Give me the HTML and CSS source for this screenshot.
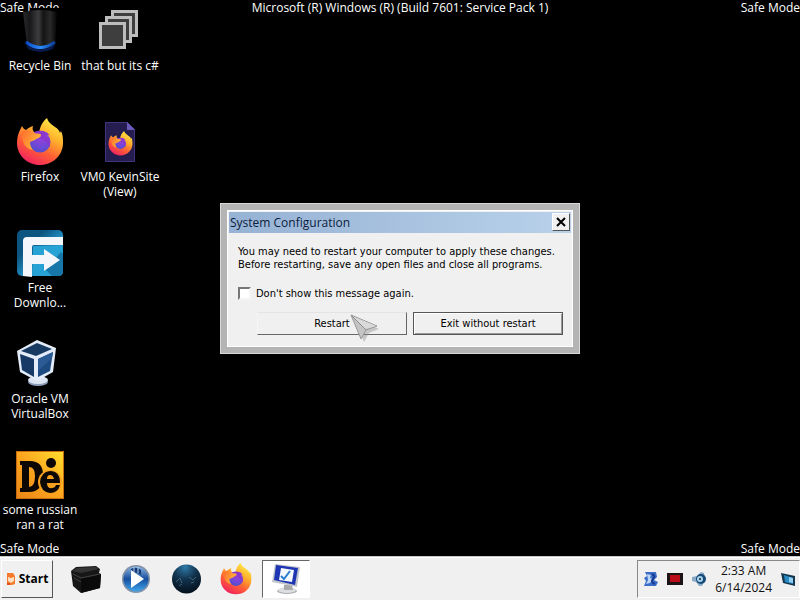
FILE: index.html
```html
<!DOCTYPE html>
<html lang="en">
<head>
<meta charset="utf-8">
<title>Desktop</title>
<link rel="stylesheet" href="styles.css">
</head>
<body>
<svg class="defs" width="0" height="0" aria-hidden="true">
  <defs>
    <linearGradient id="ffBody" x1="0.8" y1="0" x2="0.25" y2="1">
      <stop offset="0" stop-color="#fff04a"/><stop offset="0.35" stop-color="#ffb02c"/><stop offset="0.65" stop-color="#ff5f35"/><stop offset="1" stop-color="#ee1c64"/>
    </linearGradient>
    <radialGradient id="ffGlobe" cx="0.6" cy="0.25" r="0.8">
      <stop offset="0" stop-color="#a03ed8"/><stop offset="0.6" stop-color="#7048d8"/><stop offset="1" stop-color="#4d4fc9"/>
    </radialGradient>
    <linearGradient id="ffFace" x1="0" y1="0" x2="1" y2="0.6">
      <stop offset="0" stop-color="#ff6a2c"/><stop offset="1" stop-color="#ffbd3c"/>
    </linearGradient>
    <symbol id="firefox" viewBox="0 0 48 48">
      <path fill="url(#ffBody)" d="M31 0c1 4 4 6 8 9 3 2 4 3 5 6l1-2c2 4 2 8 2 12 0 12-10 22-23 22S1 37 1 25c0-5 1-9 3-13l2-4c1 2 2 3 4 4 2-2 4-3 7-4-1 3 0 5 1 6l5 1c1-6 3-11 8-15z"/>
      <circle cx="24" cy="24" r="10.500" fill="url(#ffGlobe)"/>
      <path fill="#8b36cd" d="M18 14c5-2 13-2 16 4-3-2-5-1-5 0 5 2 6 8 4 12 0-6-6-10-11-10z"/>
      <path fill="url(#ffFace)" d="M6 14c5-3 9-2 12 1 3 1 7 0 7 2 0 3-4 3-6 5l-5 2c0 3 1 6 3 8-5-1-9-4-10-9-1-4-2-6-1-9z"/>
    </symbol>
  </defs>
</svg>

<main class="desktop">
  <span class="safe safe-tl">Safe Mode</span>
  <span class="safe safe-top">Microsoft (R) Windows (R) (Build 7601: Service Pack 1)</span>
  <span class="safe safe-tr">Safe Mode</span>
  <span class="safe safe-bl">Safe Mode</span>
  <span class="safe safe-br">Safe Mode</span>

  <div class="icons">
    <a class="icon" href="#">
      <svg viewBox="0 0 48 48" width="48" height="48">
        <defs>
          <linearGradient id="bin"><stop offset="0" stop-color="#29292b"/><stop offset="0.2" stop-color="#18181a"/><stop offset="0.45" stop-color="#3c3c3e"/><stop offset="0.6" stop-color="#151515"/><stop offset="0.8" stop-color="#29292b"/><stop offset="1" stop-color="#050505"/></linearGradient>
          <linearGradient id="binGlow"><stop offset="0" stop-color="#0a48c8"/><stop offset="0.5" stop-color="#2b8cff"/><stop offset="1" stop-color="#0a3a90"/></linearGradient>
        </defs>
        <path fill="#000" d="M14 1h34v8H14z"/>
        <path fill="url(#bin)" d="M7 5q17-4 34 0l-2 33q-14 9-28 0z"/>
        <path fill="#071a4a" d="M10 37q14 10 29 0l-2 5q-13 6-25 0z"/>
        <path fill="none" stroke="url(#binGlow)" stroke-width="3" d="M10 35q14 11 29 0"/>
      </svg>
      <span>Recycle Bin</span>
    </a>
    <a class="icon" href="#">
      <svg viewBox="0 0 48 48" width="48" height="48">
        <g fill="#3e3e3e" stroke="#bdbdbd" stroke-width="3">
          <path d="M16.500 4.500h24v24h-24z"/><path d="M10.500 10.500h24v24h-24z"/><path d="M4.500 16.500h24v24h-24z"/>
        </g>
      </svg>
      <span>that but its c#</span>
    </a>
    <a class="icon" href="#">
      <svg viewBox="0 0 48 48" width="48" height="48"><use href="#firefox"/></svg>
      <span>Firefox</span>
    </a>
    <a class="icon" href="#">
      <svg viewBox="0 0 48 48" width="48" height="48">
        <path fill="#251c50" stroke="#41347c" d="M9.500 4.500h22l7 7v32h-29z"/>
        <path fill="#6a5bb8" d="M31 4l8 8h-8z"/>
        <use href="#firefox" x="12" y="13" width="25" height="25"/>
      </svg>
      <span>VM0 KevinSite (View)</span>
    </a>
    <a class="icon" href="#">
      <svg viewBox="0 0 48 48" width="48" height="48">
        <defs><linearGradient id="fdm" x2="1" y2="1"><stop offset="0.3" stop-color="#0c5580"/><stop offset="0.6" stop-color="#2496c8"/><stop offset="1" stop-color="#35b4e4"/></linearGradient></defs>
        <rect x="1" y="1" width="46" height="46" rx="5" fill="url(#fdm)"/>
        <path fill="#27a2d4" d="M17 17h30v25q0 5-5 5H17z"/>
        <path fill="#1677a8" d="M36 47l-9-9 6-1 12-14 2 2v17q0 5-5 5z"/>
        <path fill="#f3f7fb" d="M7 47V12q0-4 4-4h36v8H18q-2 0-2 2v8h12v-6l16 11-16 11v-7H16v13z"/>
      </svg>
      <span>Free
Downlo...</span>
    </a>
    <i></i>
    <a class="icon" href="#">
      <svg viewBox="0 0 48 48" width="48" height="48">
        <ellipse cx="22" cy="42" rx="10" ry="4" fill="#8d9cb8"/>
        <ellipse cx="22" cy="40" rx="10" ry="4" fill="#dde5f2"/>
        <path fill="#e3ecf8" d="M21 0l19 8-3 24-16 9L4 32 1 11z"/>
        <path fill="#173a63" d="M21 3l15 6-16 7-15-5z"/>
        <path fill="#163965" d="M4 14l14 5v18L6 30z"/>
        <path fill="#1d4a80" d="M22 19l15-7-3 19-12 6z"/>
        <path fill="#2c5a94" d="M22 19l15-7-1 6-14 13z"/>
      </svg>
      <span>Oracle VM VirtualBox</span>
    </a>
    <i></i>
    <a class="icon" href="#">
      <svg viewBox="0 0 48 48" width="48" height="48">
        <defs><linearGradient id="de" x1="1" x2="0" y2="1"><stop offset="0" stop-color="#ffe02e"/><stop offset="0.5" stop-color="#fca61e"/><stop offset="1" stop-color="#e98516"/></linearGradient></defs>
        <path fill="url(#de)" d="M0 0h48v48H0z"/>
        <path fill="none" stroke="#c76a10" d="M.5.5h47v47H.5z"/>
        <path fill="#0c0703" fill-rule="evenodd" d="M4 10h10q13 0 13 14 0 17-14 17H4v-4h2V14H4zm9 6v20q6 0 6-11 0-9-6-9z"/>
        <circle cx="35" cy="12" r="5" fill="#0c0703"/>
        <circle cx="34" cy="31" r="12" fill="#f6a01d"/>
        <path fill="#0c0703" fill-rule="evenodd" d="M34 20q10 0 10 12H31q0 6 5 5 3 0 4-3h4q-2 8-10 8-9-1-10-11 1-10 10-11zm-3 8h7q-1-4-4-4t-3 4z"/>
      </svg>
      <span>some russian ran a rat</span>
    </a>
  </div>

  <section class="dialog" role="dialog" aria-labelledby="dlg-title">
    <header class="titlebar">
      <h1 id="dlg-title">System Configuration</h1>
      <button class="close" type="button" aria-label="Close">
        <svg viewBox="0 0 10 10" width="10" height="10"><path d="M1 1l8 8M9 1L1 9" stroke="#000" stroke-width="2"/></svg>
      </button>
    </header>
    <div class="content">
      <p>You may need to restart your computer to apply these changes.<br>Before restarting, save any open files and close all programs.</p>
      <label class="check"><input type="checkbox">Don't show this message again.</label>
      <div class="actions">
        <button class="btn" type="button">Restart</button>
        <button class="btn focus" type="button">Exit without restart</button>
      </div>
    </div>
    <svg class="cursor" viewBox="0 0 30 28" width="30" height="28" aria-hidden="true">
      <path fill="#888" opacity=".4" d="M4 3l25 12-10 4-5 9z"/>
      <path fill="#c4c4c4" stroke="#999" d="M1 1l26 11-11 4-5 9z"/>
      <path fill="#dadada" d="M2 2l24 10-11 3z"/>
      <path stroke="#8d8d8d" d="M2 2l14 14" fill="none"/>
    </svg>
  </section>
</main>

<footer class="taskbar">
  <button class="start" type="button">
    <svg viewBox="0 0 10 14" width="10" height="14"><path fill="#f47a2c" d="M1 1h6l2 3v8l-3 1H1z"/><path fill="#ffe0c0" d="M2 5l3 1 3-1v4l-3 2-3-2z"/><path fill="#e84c1c" d="M1 11h3v2H1z"/></svg>
    Start
  </button>
  <nav class="tasks">
    <button class="task" type="button" aria-label="Libraries">
      <svg viewBox="0 0 32 32" width="32" height="32">
        <path fill="#171717" d="M1 8l5-4 20-1 4 3-1 4 2 1-1 14-19 5L3 23z"/>
        <path fill="#333" d="M2 8l5-3 19-1 3 2-18 4z"/><path fill="#0a0a0a" d="M11 15l20-4-1 14-19 5z"/>
        <path stroke="#444" fill="none" d="M3 11l8 4 19-4M4 15l7 4"/>
      </svg>
    </button>
    <button class="task" type="button" aria-label="Media player">
      <svg viewBox="0 0 32 32" width="32" height="32">
        <defs><linearGradient id="mp" x2="0" y2="1"><stop offset="0" stop-color="#8bb4e0"/><stop offset="0.5" stop-color="#174e9e"/><stop offset="1" stop-color="#3fa4ec"/></linearGradient></defs>
        <circle cx="16" cy="16" r="14" fill="#8292a6"/><circle cx="16" cy="16" r="12.500" fill="url(#mp)"/>
        <path fill="#123a78" d="M11 6q5-3 10 1v5l-3-2-7-1z"/><path stroke="#bed8f2" d="M14 4v5M18 4v6" fill="none"/>
        <path fill="#fff" d="M11 7l13 9-13 9z"/>
      </svg>
    </button>
    <button class="task" type="button" aria-label="Globe">
      <svg viewBox="0 0 32 32" width="32" height="32">
        <defs><radialGradient id="gl" cx=".45" cy=".1" r=".9"><stop offset="0" stop-color="#2e78a8"/><stop offset=".45" stop-color="#12344e"/><stop offset="1" stop-color="#03101c"/></radialGradient></defs>
        <circle cx="16.500" cy="16" r="14.500" fill="url(#gl)"/>
        <path stroke="#3f5f74" fill="none" d="M6 19l4-4 2 5M19 14l4 3 3-3M21 20l3-1M9 23l3-2"/>
      </svg>
    </button>
    <button class="task" type="button" aria-label="Firefox">
      <svg viewBox="0 0 48 48" width="32" height="32"><use href="#firefox"/></svg>
    </button>
    <button class="task active" type="button" aria-label="System Configuration">
      <svg viewBox="0 0 32 32" width="32" height="32">
        <ellipse cx="17" cy="28" rx="10" ry="3" fill="#a9acb0"/><ellipse cx="17" cy="27" rx="9" ry="3" fill="#dcdee1"/>
        <path fill="#aaa" d="M14 22h8l1 5h-9z"/>
        <path fill="#c2c5cb" d="M5 1l25 3-3 20L2 19z"/><path fill="#1e35b4" d="M6 2l22 3-3 17L4 17z"/>
        <path fill="#f4f8ff" d="M11 5l13 2-2 12-13-2z"/><path fill="none" stroke="#2a7cd0" stroke-width="2" d="M11 13l3 3 6-8"/>
      </svg>
    </button>
  </nav>
  <div class="tray">
    <svg viewBox="0 0 16 16" width="16" height="16"><path fill="#3a6cc8" d="M2 1h11l1 5-3 3 4 2-2 4H1l2-5-2-3 3-2z"/><path fill="#bcd8f6" d="M4 3l4 1-1 3 3 1-3 4-4 1 2-4z"/><path fill="none" stroke="#173c90" stroke-width="2" d="M9 3q4 2 1 5t2 5"/></svg>
    <svg viewBox="0 0 16 16" width="16" height="16"><path fill="#1c1414" d="M0 2h16v12H0z"/><path fill="#bb0a18" d="M3 4h10v7H3z"/></svg>
    <svg viewBox="0 0 16 16" width="16" height="16"><path fill="#8aa9c6" d="M1 6l5-1 4-4 3 1 1 7-3 6-3 0-3-4-4-1z"/><circle cx="10" cy="8" r="5" fill="#174a78"/><circle cx="9" cy="8" r="3" fill="#a9d4ee"/><circle cx="9" cy="8" r="1" fill="#123"/></svg>
    <time class="clock">2:33 AM<br>6/14/2024</time>
    <svg viewBox="0 0 16 16" width="16" height="16"><path fill="#15384e" d="M1 2l14 3v10L3 12z"/><path fill="#2a8ac4" d="M4 4l9 3v6l-8-2z"/><path fill="#8fd0f2" d="M9 6l4 1v5l-4-1z"/></svg>
  </div>
</footer>
</body>
</html>
```
FILE: styles.css
```css
* { box-sizing: border-box; }

body {
  margin: 0;
  min-height: 100vh;
  display: flex;
  flex-direction: column;
  background: #000;
  color: #fff;
  font: 12px/15px "Open Sans", "Noto Sans", sans-serif;
}

button { font: inherit; color: #000; padding: 0; border-radius: 0; }
svg { display: block; flex: none; }
.defs { position: absolute; }

.desktop {
  flex: 1;
  position: relative;
  display: grid;
}

.safe { position: absolute; white-space: nowrap; }
.safe-tl { top: 0; left: 0; }
.safe-top { top: 0; left: 0; right: 0; text-align: center; }
.safe-tr { top: 0; right: 0; }
.safe-bl { bottom: 0; left: 0; }
.safe-br { bottom: 0; right: 0; }

.icons {
  grid-area: 1 / 1;
  position: relative;
  display: grid;
  grid-template-columns: 80px 80px;
  grid-template-rows: repeat(4, 111px) auto;
  align-content: start;
  padding-top: 7px;
}

.icon {
  display: flex;
  flex-direction: column;
  align-items: center;
  gap: 3px;
  color: #fff;
  text-align: center;
  text-decoration: none;
  white-space: pre-line;
}

.dialog {
  grid-area: 1 / 1;
  place-self: center;
  position: relative;
  width: 360px;
  padding: 2px 2px 1px;
  border: 7px solid #b4b4b4;
  background: #f0f0f0;
  color: #000;
  font: 11px/13px "DejaVu Sans Condensed", "DejaVu Sans", sans-serif;
  outline: 1px solid #d8d8d8;
  outline-offset: -1px;
  box-shadow: inset 0 0 0 1px #fff;
}

.titlebar {
  display: flex;
  align-items: center;
  justify-content: space-between;
  height: 21px;
  padding: 0 1px;
  background: linear-gradient(90deg, #96b2d4, #b9d1ea);
}

.titlebar h1 {
  margin: 0;
  color: #0b1c3c;
  font: 12px/15px "Open Sans", "Noto Sans", sans-serif;
}

.close {
  display: grid;
  place-items: center;
  width: 18px;
  height: 18px;
  background: #f0f0f0;
  border: 1px solid;
  border-color: #fff #555 #555 #fff;
}

.content { padding: 12px 8px 11px 9px; }
.content p { margin: 0 0 16px; white-space: nowrap; }

.check { display: flex; align-items: center; gap: 5px; }

.check input {
  appearance: none;
  width: 13px;
  height: 13px;
  margin: 0;
  background: #fff;
  border: 2px solid;
  border-color: #777 #f4f4f4 #f4f4f4 #777;
}

.actions {
  display: flex;
  justify-content: flex-end;
  gap: 6px;
  margin-top: 12px;
}

.btn {
  width: 150px;
  height: 23px;
  background: #f0f0f0;
  border: 1px solid;
  border-color: #e4e4e4 #666 #666 #f6f6f6;
}

.btn.focus {
  border-color: #555;
  box-shadow: inset 1px 1px #fff, inset -1px -1px #999;
}

.cursor { position: absolute; left: 123px; top: 104px; }

.taskbar {
  display: flex;
  align-items: center;
  height: 44px;
  padding: 2px 0 2px 1px;
  background: #f0f0f0;
  border-top: 1px solid #c8c8c8;
  box-shadow: inset 0 1px #fff;
}

.start {
  display: flex;
  align-items: center;
  justify-content: center;
  gap: 3px;
  width: 52px;
  height: 38px;
  font-weight: bold;
  background: #f0f0f0;
  border: 1px solid;
  border-color: #fff #555 #555 #fff;
}

.tasks { display: flex; gap: 2px; margin-left: 9px; }

.task {
  display: grid;
  place-items: center;
  width: 48px;
  height: 38px;
  background: none;
  border: 1px solid transparent;
}

.task.active {
  background: #fff;
  border-color: #666 #fff #fff #666;
}

.tray {
  display: flex;
  align-items: center;
  gap: 8px;
  height: 38px;
  margin-left: auto;
  padding: 0 3px 0 5px;
  color: #111;
  border: 1px solid;
  border-color: #888 #fff #fff #888;
}

.clock { line-height: 17px; text-align: center; }
```
